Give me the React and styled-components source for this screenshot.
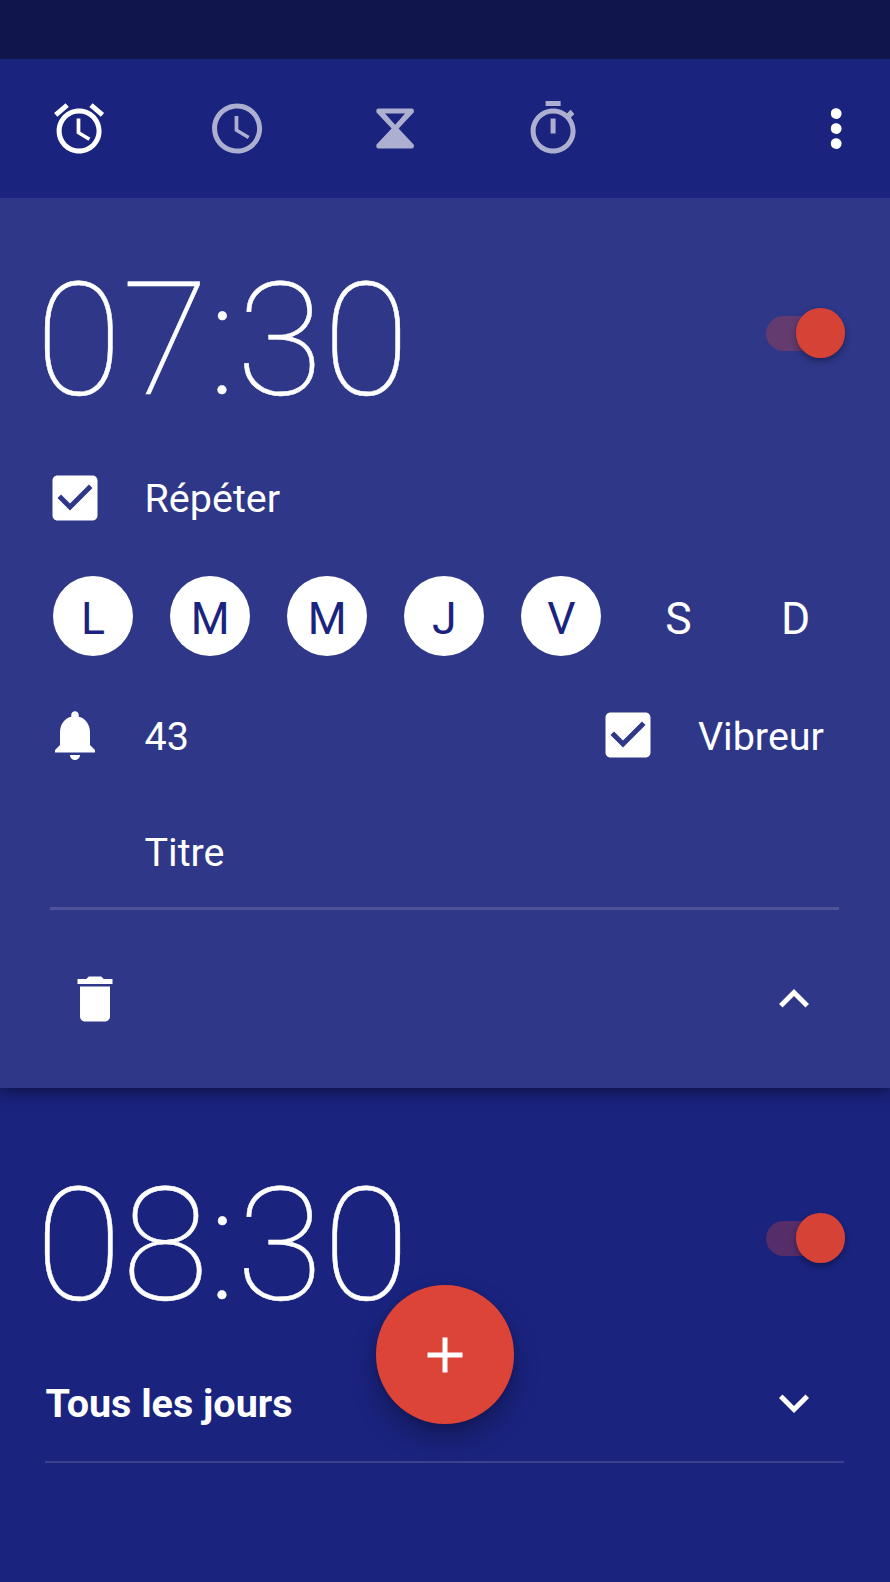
import React from "react";
import styled, { createGlobalStyle } from "styled-components";

const GlobalStyle = createGlobalStyle`
  *, *::before, *::after { box-sizing: border-box; }
  body {
    margin: 0;
    background: #1a237e;
    font-family: Roboto, "Liberation Sans", sans-serif;
    color: #fff;
  }
  button { border: 0; padding: 0; background: none; color: inherit; font: inherit; }
`;

const Screen = styled.div`
  position: relative;
  display: flex;
  flex-direction: column;
  width: 890px;
  height: 1582px;
  overflow: hidden;
  background: #1a237e;
`;

const StatusBar = styled.div`
  flex: none;
  height: 59px;
  background: #10154b;
`;

const TabBar = styled.nav`
  position: relative;
  z-index: 1;
  flex: none;
  display: flex;
  align-items: center;
  height: 139px;
  padding: 0 25px 0 0;
  background: #1a237e;

  svg { transform: translate(0.1px, -0.4px); }
`;

const Tab = styled.button`
  display: flex;
  justify-content: center;
  width: 158.1px;
  opacity: ${(p) => (p.$active ? 1 : 0.64)};
`;

const MenuButton = styled.button`
  display: flex;
  margin-left: auto;
`;

const Svg = styled.svg`
  display: block;
  flex: none;
  width: 60px;
  height: 60px;
  fill: currentColor;
`;

const AlarmCard = styled.section`
  flex: none;
  display: flex;
  flex-direction: column;
  ${(p) =>
    p.$expanded &&
    `
    height: 890px;
    background: #2e3788;
    box-shadow: 0 5px 12px rgba(12, 16, 60, 0.75);
  `}
`;

const TimeRow = styled.div`
  display: flex;
  align-items: center;
  justify-content: space-between;
  height: 160px;
  margin-top: ${(p) => p.$top}px;
  padding: 0 45px 0 35.5px;
`;

const Time = styled.div`
  padding-top: 13px;
  font-size: 158px;
  font-weight: 100;
  line-height: 160px;
  white-space: nowrap;
  -webkit-text-stroke: 0.5px #fff;
`;

const Switch = styled.div`
  display: flex;
  align-items: center;
`;

const Track = styled.span`
  width: 60px;
  height: 35px;
  border-radius: 18px;
  background: rgba(219, 68, 55, 0.31);
`;

const Thumb = styled.span`
  width: 49.5px;
  height: 49.5px;
  margin-left: -30.5px;
  border-radius: 50%;
  background: #d64336;
  box-shadow: 0 3px 6px rgba(0, 0, 0, 0.35);
`;

const OptionRow = styled.div`
  display: flex;
  align-items: center;
  height: 60px;
  margin-top: ${(p) => p.$top}px;
  padding: 0 66px 0 45px;
`;

const OptionLabel = styled.span`
  padding-top: 3px;
  margin-left: 39.5px;
  font-size: 39.5px;
  line-height: 50px;
`;

const Vibrate = styled.div`
  display: flex;
  align-items: center;
  margin-left: auto;
`;

const Days = styled.div`
  display: flex;
  gap: 37.1px;
  margin-top: 48.5px;
  padding-left: 53px;
`;

const Day = styled.button`
  width: 80px;
  height: 80px;
  padding-top: 6px;
  border-radius: 50%;
  font-size: 44.5px;
  line-height: 75px;
  text-align: center;
  color: ${(p) => (p.$on ? "#1a237e" : "#fff")};
  background: ${(p) => (p.$on ? "#fff" : "transparent")};
`;

const TitleField = styled.div`
  height: 82.5px;
  margin: 62.5px 51px 0 50px;
  padding-left: 94.5px;
  border-bottom: 3px solid #4d5299;
  font-size: 39.5px;
  line-height: 50px;
`;

const CardActions = styled.div`
  display: flex;
  align-items: center;
  justify-content: space-between;
  margin-top: 58.5px;
  padding: 0 66px 0 65px;
`;

const SummaryRow = styled.div`
  display: flex;
  align-items: center;
  justify-content: space-between;
  height: 145px;
  margin: 0 46px 0 45px;
  padding: 26px 20px 0 0;
  border-bottom: 2px solid #3a4290;
`;

const Summary = styled.span`
  padding: 2px 0 0 0.5px;
  font-size: 39.5px;
  font-weight: 700;
  line-height: 50px;
`;

const AddButton = styled.button`
  position: absolute;
  left: 375.7px;
  top: 1285px;
  display: flex;
  align-items: center;
  justify-content: center;
  width: 138.8px;
  height: 139px;
  border-radius: 50%;
  background: #db4437;
  box-shadow: 0 14px 26px rgba(0, 0, 0, 0.26), 0 2px 6px rgba(0, 0, 0, 0.16);
`;

const PATHS = {
  alarm:
    "M22 5.72l-4.6-3.86-1.29 1.53 4.6 3.86L22 5.72zM7.88 3.39L6.6 1.86 2 5.71l1.29 1.53 4.59-3.85zM12.5 8H11v6l4.75 2.85.75-1.23-4-2.37V8zM12 4c-4.97 0-9 4.03-9 9s4.02 9 9 9c4.97 0 9-4.03 9-9s-4.03-9-9-9zm0 16c-3.87 0-7-3.13-7-7s3.13-7 7-7 7 3.13 7 7-3.13 7-7 7z",
  clock:
    "M11.99 2C6.47 2 2 6.48 2 12s4.47 10 9.99 10C17.52 22 22 17.52 22 12S17.52 2 11.99 2zM12 20c-4.42 0-8-3.58-8-8s3.58-8 8-8 8 3.58 8 8-3.58 8-8 8zM12.5 7H11v6l5.25 3.15.75-1.23-4.5-2.67z",
  hourglass:
    "M5.3 4h13.4a.8.8 0 0 1 .8.8v.7L13.4 12l6.1 6.5v.7a.8.8 0 0 1-.8.8H5.3a.8.8 0 0 1-.8-.8v-.7L10.6 12 4.5 5.5v-.7a.8.8 0 0 1 .8-.8zM8 6l4 4.5L16 6z",
  timer:
    "M15 1H9v2h6V1zm-4 13h2V8h-2v6zm8-9.5l-2.1 2.1 1.6 1.6 2-2zM12 4c-4.97 0-9 4.03-9 9s4.02 9 9 9 9-4.03 9-9-4.03-9-9-9zm0 16c-3.87 0-7-3.13-7-7s3.13-7 7-7 7 3.13 7 7-3.13 7-7 7z",
  more: "M12 8.1a2.15 2.15 0 1 0 0-4.2 2.15 2.15 0 0 0 0 4.2zM12 14.1a2.15 2.15 0 1 0 0-4.2 2.15 2.15 0 0 0 0 4.2zM12 20.1a2.15 2.15 0 1 0 0-4.2 2.15 2.15 0 0 0 0 4.2z",
  checkbox:
    "M19 3H5c-1.11 0-2 .9-2 2v14c0 1.1.89 2 2 2h14c1.11 0 2-.9 2-2V5c0-1.1-.89-2-2-2zm-9 14l-5-5 1.41-1.41L10 14.17l7.59-7.59L19 8l-9 9z",
  bell: "M12 22c1.1 0 2-.9 2-2h-4c0 1.1.89 2 2 2zm6-6v-5c0-3.07-1.64-5.64-4.5-6.32V4c0-.83-.67-1.5-1.5-1.5s-1.5.67-1.5 1.5v.68C7.63 5.36 6 7.92 6 11v5l-2 2v1h16v-1l-2-2z",
  trash: "M6 19c0 1.1.9 2 2 2h8c1.1 0 2-.9 2-2V7H6v12zM19 4h-3.5l-1-1h-5l-1 1H5v2h14V4z",
  up: "M12 8l-6 6 1.41 1.41L12 10.83l4.59 4.58L18 14z",
  down: "M16.59 8.59L12 13.17 7.41 8.59 6 10l6 6 6-6z",
  plus: "M19 13h-6v6h-2v-6H5v-2h6V5h2v6h6v2z",
};

const Icon = ({ name }) => (
  <Svg viewBox="0 0 24 24" aria-hidden="true">
    <path d={PATHS[name]} />
  </Svg>
);

const Toggle = () => (
  <Switch role="switch" aria-checked="true">
    <Track />
    <Thumb />
  </Switch>
);

const TABS = ["alarm", "clock", "hourglass", "timer"];
const DAYS = [
  ["L", true],
  ["M", true],
  ["M", true],
  ["J", true],
  ["V", true],
  ["S", false],
  ["D", false],
];

export default function App() {
  return (
    <>
      <GlobalStyle />
      <Screen>
        <StatusBar />
        <TabBar>
          {TABS.map((name, i) => (
            <Tab key={name} $active={i === 0}>
              <Icon name={name} />
            </Tab>
          ))}
          <MenuButton>
            <Icon name="more" />
          </MenuButton>
        </TabBar>

        <AlarmCard $expanded>
          <TimeRow $top={55}>
            <Time>07:30</Time>
            <Toggle />
          </TimeRow>
          <OptionRow $top={54.5}>
            <Icon name="checkbox" />
            <OptionLabel>Répéter</OptionLabel>
          </OptionRow>
          <Days>
            {DAYS.map(([label, on], i) => (
              <Day key={i} $on={on}>
                {label}
              </Day>
            ))}
          </Days>
          <OptionRow $top={49}>
            <Icon name="bell" />
            <OptionLabel>43</OptionLabel>
            <Vibrate>
              <Icon name="checkbox" />
              <OptionLabel>Vibreur</OptionLabel>
            </Vibrate>
          </OptionRow>
          <TitleField>Titre</TitleField>
          <CardActions>
            <Icon name="trash" />
            <Icon name="up" />
          </CardActions>
        </AlarmCard>

        <AlarmCard>
          <TimeRow $top={70}>
            <Time>08:30</Time>
            <Toggle />
          </TimeRow>
          <SummaryRow>
            <Summary>Tous les jours</Summary>
            <Icon name="down" />
          </SummaryRow>
        </AlarmCard>

        <AddButton aria-label="+">
          <Icon name="plus" />
        </AddButton>
      </Screen>
    </>
  );
}
